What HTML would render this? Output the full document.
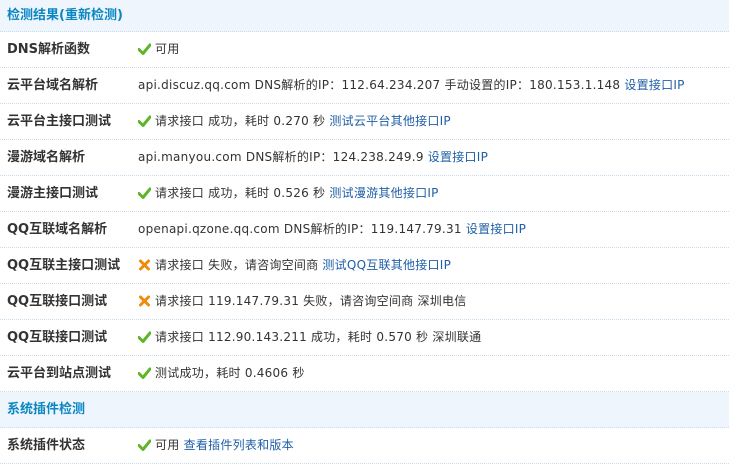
<!DOCTYPE html>
<html><head><meta charset="utf-8"><style>
body{margin:0;width:729px;height:467px;background:#fff;font-family:"DejaVu Sans","Noto Sans CJK SC",sans-serif;font-size:12px;color:#333;overflow:hidden}
.r{height:35px;border-bottom:1px dotted #c6dcef;position:relative;line-height:35px}
.h{background:#eef5fc;color:#0a86c2;font-weight:bold;padding-left:7px;font-size:13px}
.r0{height:31px;line-height:31px}
.l{position:absolute;left:7px;font-weight:bold;color:#333;font-size:13px}
.v{position:absolute;left:138px;white-space:nowrap;letter-spacing:0.25px}
a{color:#1f5fa6;text-decoration:none}
.ok,.no{display:inline-block;width:13px;margin-right:4px;vertical-align:-2px}
</style></head><body>
<svg width="0" height="0" style="position:absolute"><defs>
<symbol id="ok" viewBox="0 0 13 12"><path d="M1 6.5 L5 10.5 L12 2" fill="none" stroke="#5fb52a" stroke-width="3" stroke-linecap="round" stroke-linejoin="round"/></symbol>
<symbol id="no" viewBox="0 0 13 12"><path d="M2.5 2 L10.5 10 M10.5 2 L2.5 10" fill="none" stroke="#f08a0a" stroke-width="3" stroke-linecap="round"/></symbol>
</defs></svg>
<div class="r h r0">检测结果(重新检测)</div>
<div class="r"><span class="l">DNS解析函数</span><span class="v"><svg class="ok" height="12"><use href="#ok"/></svg>可用</span></div>
<div class="r"><span class="l">云平台域名解析</span><span class="v">api.discuz.qq.com DNS解析的IP：112.64.234.207 手动设置的IP：180.153.1.148 <a>设置接口IP</a></span></div>
<div class="r"><span class="l">云平台主接口测试</span><span class="v"><svg class="ok" height="12"><use href="#ok"/></svg>请求接口 成功，耗时 0.270 秒 <a>测试云平台其他接口IP</a></span></div>
<div class="r"><span class="l">漫游域名解析</span><span class="v">api.manyou.com DNS解析的IP：124.238.249.9 <a>设置接口IP</a></span></div>
<div class="r"><span class="l">漫游主接口测试</span><span class="v"><svg class="ok" height="12"><use href="#ok"/></svg>请求接口 成功，耗时 0.526 秒 <a>测试漫游其他接口IP</a></span></div>
<div class="r"><span class="l">QQ互联域名解析</span><span class="v">openapi.qzone.qq.com DNS解析的IP：119.147.79.31 <a>设置接口IP</a></span></div>
<div class="r"><span class="l">QQ互联主接口测试</span><span class="v"><svg class="no" height="12"><use href="#no"/></svg>请求接口 失败，请咨询空间商 <a>测试QQ互联其他接口IP</a></span></div>
<div class="r"><span class="l">QQ互联接口测试</span><span class="v"><svg class="no" height="12"><use href="#no"/></svg>请求接口 119.147.79.31 失败，请咨询空间商 深圳电信</span></div>
<div class="r"><span class="l">QQ互联接口测试</span><span class="v"><svg class="ok" height="12"><use href="#ok"/></svg>请求接口 112.90.143.211 成功，耗时 0.570 秒 深圳联通</span></div>
<div class="r"><span class="l">云平台到站点测试</span><span class="v"><svg class="ok" height="12"><use href="#ok"/></svg>测试成功，耗时 0.4606 秒</span></div>
<div class="r h">系统插件检测</div>
<div class="r"><span class="l">系统插件状态</span><span class="v"><svg class="ok" height="12"><use href="#ok"/></svg>可用 <a>查看插件列表和版本</a></span></div>
</body></html>
